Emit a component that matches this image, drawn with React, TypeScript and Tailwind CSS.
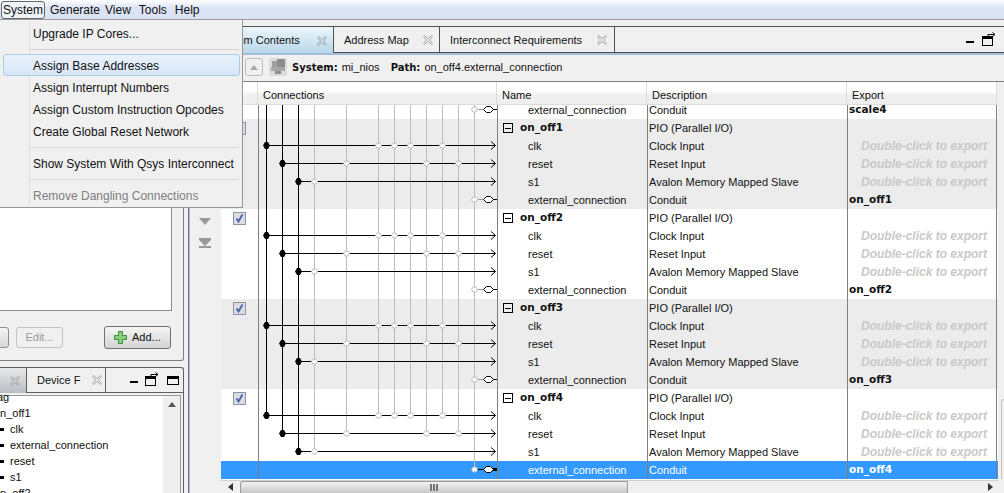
import * as React from 'react';

type Kind = 'head' | 'clk' | 'reset' | 's1' | 'ext';

const BLACK = [266.5, 282.5, 298.5];
const GRAY = [314.5, 346.5, 378.5, 394.5, 410.5, 426.5, 442.5, 458.5, 474.5];

const TAPS: Record<Kind, { black?: number; gray: number[] }> = {
  head: { gray: [] },
  clk: { black: 266.5, gray: [378.5, 394.5, 410.5, 442.5] },
  reset: { black: 282.5, gray: [346.5, 426.5, 458.5] },
  s1: { black: 298.5, gray: [314.5] },
  ext: { gray: [474.5] },
};

const ORDER: Kind[] = ['head', 'clk', 'reset', 's1', 'ext'];

// how far down a wire runs in the last group: it stops at its last tap
function lastTapKind(x: number): Kind {
  for (let i = ORDER.length - 1; i >= 0; i--) {
    const t = TAPS[ORDER[i]];
    if (t.black === x || t.gray.includes(x)) return ORDER[i];
  }
  return 'head';
}

function WireCell({ kind, last, selected }: { kind: Kind; last?: boolean; selected?: boolean }) {
  const idx = ORDER.indexOf(kind);
  const wire = (x: number, color: string) => {
    if (!last) return <line key={x} x1={x} x2={x} y1={0} y2={18} stroke={color} />;
    const end = ORDER.indexOf(lastTapKind(x));
    if (idx > end) return null;
    return <line key={x} x1={x} x2={x} y1={0} y2={idx === end ? 8.5 : 18} stroke={color} />;
  };
  const tap = TAPS[kind];
  return (
    <svg className="block h-[18px] w-[238px]" viewBox="259 0 238 18">
      {GRAY.map((x) => wire(x, '#bdbdbd'))}
      {BLACK.map((x) => wire(x, '#000'))}
      {tap.black !== undefined && (
        <>
          <line x1={tap.black} x2={495} y1={8.5} y2={8.5} stroke="#000" />
          <polyline points="491,4.5 495.5,8.5 491,12.5" fill="none" stroke="#000" />
        </>
      )}
      {tap.gray.map((x) => (
        <path
          key={x}
          d={`M${x - 3} 8.5 L${x - 1.5} 6 H${x + 1.5} L${x + 3} 8.5 L${x + 1.5} 11 H${x - 1.5} Z`}
          fill="#fff"
          stroke="#bdbdbd"
        />
      ))}
      {tap.black !== undefined && (
        <path
          d={`M${tap.black - 3.5} 8.5 L${tap.black - 1.5} 5 H${tap.black + 1.5} L${tap.black + 3.5} 8.5 L${tap.black + 1.5} 12 H${tap.black - 1.5} Z`}
          fill="#000"
        />
      )}
      {kind === 'ext' && (
        <>
          <line x1={478} x2={483} y1={8.5} y2={8.5} stroke={selected ? '#000' : '#9a9a9a'} />
          <path d="M483.5 8.5 L486.5 5.5 H490.5 L493.5 8.5 L490.5 11.5 H486.5 Z" fill="#fff" stroke="#000" />
          <line x1={493} x2={497} y1={8.5} y2={8.5} stroke="#000" strokeWidth={selected ? 3 : 1} />
        </>
      )}
    </svg>
  );
}

function CloseIcon({ className = '' }: { className?: string }) {
  return (
    <svg className={`h-[12px] w-[12px] shrink-0 ${className}`} viewBox="0 0 12 12">
      <path
        d="M1.5 2.5 L2.5 1.5 L6 4.5 L9.5 1.5 L10.5 2.5 L7.5 6 L10.5 9.5 L9.5 10.5 L6 7.5 L2.5 10.5 L1.5 9.5 L4.5 6 Z"
        fill="none"
        stroke="#a3a3a3"
      />
    </svg>
  );
}

function MinIcon() {
  return <div className="h-[2px] w-[8px] bg-black" />;
}

function FloatIcon() {
  return (
    <svg className="h-[15px] w-[15px]" viewBox="0 0 15 15">
      <rect x="0.5" y="4.5" width="10" height="9" fill="none" stroke="#000" />
      <rect x="0" y="4" width="11" height="3" fill="#000" />
      <path d="M6 4 L6 2.5 H12 M10.5 0.5 L13 2.5 L10.5 4.5" fill="none" stroke="#000" />
    </svg>
  );
}

function MaxIcon() {
  return (
    <svg className="h-[10px] w-[13px]" viewBox="0 0 13 10">
      <rect x="0.5" y="0.5" width="11" height="8" fill="none" stroke="#000" />
      <rect x="0" y="0" width="12" height="3" fill="#000" />
    </svg>
  );
}

function Triangle({ dir, className = '' }: { dir: 'up' | 'down' | 'left' | 'right'; className?: string }) {
  const pts = {
    up: '0,8 5,0 10,8',
    down: '0,0 10,0 5,8',
    left: '10,0 10,8 0,4',
    right: '0,0 0,8 10,4',
  }[dir];
  return (
    <svg className={className} viewBox="0 0 10 8" preserveAspectRatio="none">
      <polygon points={pts} fill="currentColor" />
    </svg>
  );
}

function Check() {
  return (
    <div className="flex h-[13px] w-[13px] items-center justify-center border border-[#8d96a3] bg-[#d9dde3]">
      <svg className="h-[11px] w-[11px]" viewBox="0 0 11 11">
        <path d="M2.5 5.5 L4.5 8.5 L8.5 1.5" fill="none" stroke="#4a62a8" strokeWidth="1.8" />
      </svg>
    </div>
  );
}

function Minus() {
  return (
    <div className="flex h-[10px] w-[10px] shrink-0 items-center justify-center border border-black">
      <div className="h-px w-[6px] bg-black" />
    </div>
  );
}

function Row({
  kind,
  label,
  desc,
  exportName,
  last,
  selected,
  check,
  className = '',
}: {
  kind: Kind;
  label: string;
  desc: string;
  exportName?: string;
  last?: boolean;
  selected?: boolean;
  check?: boolean;
  className?: string;
}) {
  const line = 'border-l border-[#808080]';
  return (
    <div className={`flex h-[18px] whitespace-nowrap ${selected ? 'bg-[#3399ff] text-white' : ''} ${className}`}>
      <div className="w-[37px] pl-[12px] pt-[3px]">{check && <Check />}</div>
      <div className={`w-[239px] ${line}`}>
        <WireCell kind={kind} last={last} selected={selected} />
      </div>
      <div className={`flex w-[150px] items-center ${line}`}>
        {kind === 'head' ? (
          <div className="flex items-center gap-[7px] pl-[5px] font-bold">
            <Minus />
            <span className="font-['DejaVu_Sans',sans-serif] text-[10.5px]">{label}</span>
          </div>
        ) : (
          <span className="pl-[30px]">{label}</span>
        )}
      </div>
      <div className={`flex w-[200px] items-center pl-px ${line}`}>{desc}</div>
      <div className={`flex w-[150px] items-center border-r ${line}`}>
        {exportName ? (
          <span className="pl-px font-['DejaVu_Sans',sans-serif] text-[10.5px] font-bold">{exportName}</span>
        ) : kind === 'head' ? null : (
          <span className="pl-[13px] text-[12px] font-bold italic text-[#c9c9c9]">Double-click to export</span>
        )}
      </div>
    </div>
  );
}

function Group({ name, index, last }: { name: string; index: number; last?: boolean }) {
  const shaded = index % 2 === 0;
  return (
    <div className={shaded ? 'bg-[#ececec]' : 'bg-white'}>
      <Row kind="head" label={name} desc="PIO (Parallel I/O)" check last={last} />
      <Row kind="clk" label="clk" desc="Clock Input" last={last} />
      <Row kind="reset" label="reset" desc="Reset Input" last={last} />
      <Row kind="s1" label="s1" desc="Avalon Memory Mapped Slave" last={last} />
      <Row kind="ext" label="external_connection" desc="Conduit" exportName={name} last={last} selected={last} />
    </div>
  );
}

function HeaderCell({ label, className = '' }: { label?: string; className?: string }) {
  return (
    <div
      className={`flex h-[22px] items-center border-r border-[#dcdcdc] bg-gradient-to-b from-white from-40% to-[#efefef] to-60% pl-[5px] pt-[4px] ${className}`}
    >
      {label}
    </div>
  );
}

function MenuItem({ label, active, disabled }: { label: string; active?: boolean; disabled?: boolean }) {
  return (
    <div
      className={`ml-[3px] mr-[2px] flex h-[22px] items-center rounded-[3px] border pl-[29px] pt-[2px] ${
        active ? 'border-[#a8cdea] bg-gradient-to-b from-[#eaf2fb] to-[#d6e6f7]' : 'border-transparent'
      } ${disabled ? 'text-[#7f7f7f]' : ''}`}
    >
      {label}
    </div>
  );
}

function MenuSep() {
  return (
    <div className="flex h-[10px] items-center pl-[30px] pr-[3px]">
      <div className="h-px w-full bg-[#d7d7d7]" />
    </div>
  );
}

function SystemMenu() {
  return (
    <div className="absolute left-0 top-[20px] z-10 h-[188px] w-[243px] border-b border-r border-[#979797] bg-[#f0f0f0] pt-[2px] text-[12px]">
      <div className="absolute bottom-[2px] left-[29px] top-[2px] w-px bg-[#dfdfdf]" />
      <div className="relative">
        <MenuItem label="Upgrade IP Cores..." />
        <MenuSep />
        <MenuItem label="Assign Base Addresses" active />
        <MenuItem label="Assign Interrupt Numbers" />
        <MenuItem label="Assign Custom Instruction Opcodes" />
        <MenuItem label="Create Global Reset Network" />
        <MenuSep />
        <MenuItem label="Show System With Qsys Interconnect" />
        <MenuSep />
        <MenuItem label="Remove Dangling Connections" disabled />
      </div>
    </div>
  );
}

function LeftColumn() {
  const treeRow = 'flex h-[16px] items-center whitespace-nowrap';
  const bullet = <div className="mr-[6px] h-[3px] w-[4px] bg-black" />;
  return (
    <div className="flex w-[188px] shrink-0 flex-col">
      <div className="mt-[6px] flex h-[335px] w-[184px] flex-col rounded-br-[3px] border-b border-r border-[#808080]">
        <div className="mr-[11px] flex-1 border-b border-r border-[#8c8c8c] bg-white" />
        <div className="flex h-[49px] items-start pt-[16px]">
          <div className="-ml-[10px] h-[21px] w-[19px] rounded-[3px] border border-[#8c8c8c] bg-gradient-to-b from-[#f4f4f4] to-[#d8d8d8]" />
          <div className="ml-[7px] flex h-[21px] w-[47px] items-center justify-center rounded-[3px] border border-[#c4c4c4] text-[#9a9a9a]">
            Edit...
          </div>
          <div className="ml-[41px] -mt-px flex h-[23px] w-[67px] items-center gap-[5px] rounded-[3px] border border-[#707070] bg-gradient-to-b from-[#f5f5f5] to-[#d4d4d4] pl-[9px]">
            <svg className="h-[13px] w-[13px]" viewBox="0 0 13 13">
              <path d="M4.5 .5 H8.5 V4.5 H12.5 V8.5 H8.5 V12.5 H4.5 V8.5 H.5 V4.5 H4.5 Z" fill="#86d07c" stroke="#3f8f3f" />
            </svg>
            Add...
          </div>
        </div>
      </div>
      <div className="mt-[6px] flex min-h-0 w-[184px] flex-1 flex-col rounded-tr-[3px] border-r border-t border-[#606060]">
        <div className="flex h-[25px] shrink-0">
          <div className="flex w-[27px] items-center justify-end border-r border-[#606060] bg-gradient-to-b from-[#e8e8e8] to-[#b9bdc2] pr-[5px]">
            <CloseIcon />
          </div>
          <div className="flex w-[79px] items-center whitespace-nowrap border-b border-r border-[#606060] pl-[10px]">
            Device F
            <CloseIcon className="ml-[11px]" />
          </div>
          <div className="flex flex-1 items-center justify-end gap-[7px] border-b border-[#606060] pb-px pr-[3px]">
            <div className="mt-[5px]">
              <MinIcon />
            </div>
            <FloatIcon />
            <div className="mt-[2px]">
              <MaxIcon />
            </div>
          </div>
        </div>
        <div className="mr-[2px] mt-[2px] flex min-h-0 flex-1 border-r border-t border-[#9a9a9a] bg-white">
          <div className="-mt-[7px] min-w-0 flex-1 overflow-hidden">
            <div className={`${treeRow} -ml-[3px]`}>ag</div>
            <div className={`${treeRow} -ml-[6px]`}>on_off1</div>
            <div className={treeRow}>{bullet}clk</div>
            <div className={treeRow}>{bullet}external_connection</div>
            <div className={treeRow}>{bullet}reset</div>
            <div className={treeRow}>{bullet}s1</div>
            <div className={`${treeRow} -ml-[6px]`}>on_off2</div>
          </div>
          <div className="flex w-[17px] shrink-0 justify-center bg-[#efefef] pt-[6px] text-[#555]">
            <Triangle dir="up" className="h-[5px] w-[8px]" />
          </div>
        </div>
      </div>
    </div>
  );
}

function Tab({ label, width, gap, active }: { label: string; width: string; gap: string; active?: boolean }) {
  return (
    <div
      className={`flex items-center justify-between whitespace-nowrap border-r border-[#505050] pt-px ${width} ${gap} ${
        active ? 'bg-gradient-to-b from-[#ecf7fc] to-[#b9d7ea]' : 'border-b'
      }`}
    >
      <span>{label}</span>
      <CloseIcon />
    </div>
  );
}

function RightColumn() {
  return (
    <div className="flex min-w-0 flex-1 flex-col pt-[6px]">
      <div className="flex h-[27px] shrink-0 border-t border-[#505050]">
        <Tab label="System Contents" width="w-[144px]" gap="pl-[26px] pr-[5px]" active />
        <Tab label="Address Map" width="w-[106px]" gap="pl-[10px] pr-[5px]" />
        <Tab label="Interconnect Requirements" width="w-[175px]" gap="pl-[10px] pr-[6px]" />
        <div className="flex flex-1 items-center justify-end gap-[8px] border-b border-[#505050] pr-[7px]">
          <div className="mt-[5px]">
            <MinIcon />
          </div>
          <FloatIcon />
        </div>
      </div>
      <div className="h-[2px] shrink-0 bg-[#a4bdd8]" />
      <div className="flex h-[27px] shrink-0 items-center border-b border-[#808080] pb-[2px] pl-[55px]">
        <div className="flex h-[18px] w-[18px] items-center justify-center rounded-[3px] border border-[#bcbcbc] text-[#a8a8a8]">
          <Triangle dir="up" className="h-[5px] w-[8px]" />
        </div>
        <svg className="ml-[6px] h-[18px] w-[18px]" viewBox="0 0 18 18">
          <rect width="18" height="18" rx="2" fill="#dcdcdc" />
          <rect x="3" y="3" width="5" height="6" fill="#a0a0a0" />
          <rect x="8" y="1" width="8" height="8" fill="#8c8c8c" />
          <rect x="2" y="9" width="14" height="4" fill="#a6a6a6" />
          <rect x="6" y="13" width="6" height="3" fill="#8c8c8c" />
        </svg>
        <span className="ml-[5px] font-['DejaVu_Sans',sans-serif] text-[10px] font-bold">System:</span>
        <span className="ml-[4px] w-[49px]">mi_nios</span>
        <span className="font-['DejaVu_Sans',sans-serif] text-[10px] font-bold">Path:</span>
        <span className="ml-[4px]">on_off4.external_connection</span>
      </div>
      <div className="flex min-h-0 flex-1">
        <div className="flex w-[31px] shrink-0 flex-col items-center pr-px pt-[136px] text-[#999]">
          <Triangle dir="down" className="h-[7px] w-[12px]" />
          <div className="mt-[13px] h-[2px] w-[12px] bg-current" />
          <Triangle dir="down" className="h-[6px] w-[12px]" />
          <div className="h-[2px] w-[12px] bg-current" />
        </div>
        <div className="flex w-[777px] shrink-0 flex-col">
          <div className="flex shrink-0 border-b border-[#dcdcdc]">
            <HeaderCell className="w-[37px]" />
            <HeaderCell className="w-[239px]" label="Connections" />
            <HeaderCell className="w-[150px]" label="Name" />
            <HeaderCell className="w-[200px]" label="Description" />
            <HeaderCell className="w-[150px]" label="Export" />
          </div>
          <div className="h-[375px] shrink-0 overflow-hidden bg-white">
            <Row
              kind="ext"
              label="external_connection"
              desc="Conduit"
              exportName="scale4"
              className="-mt-[4px]"
            />
            <Group name="on_off1" index={0} />
            <Group name="on_off2" index={1} />
            <Group name="on_off3" index={2} />
            <Group name="on_off4" index={3} last />
          </div>
          <div className="flex min-h-0 flex-1 items-stretch border-t border-[#d0d0d0]">
            <div className="flex w-[19px] items-center justify-center text-[#333]">
              <Triangle dir="left" className="h-[8px] w-[5px]" />
            </div>
            <div className="relative flex w-[388px] items-center justify-center rounded-tl-[3px] border-l border-r border-t border-[#9a9a9a] bg-gradient-to-b from-[#f2f2f2] to-[#c8c8c8]">
              <div className="h-[7px] w-[8px] border-x-2 border-[#777]">
                <div className="mx-auto h-full w-[2px] bg-[#777]" />
              </div>
            </div>
            <div className="flex flex-1 items-center justify-end bg-[#f0f0f0] pr-[5px] text-[#333]">
              <Triangle dir="right" className="h-[8px] w-[5px]" />
            </div>
          </div>
        </div>
        <div className="flex-1 pl-[3px] pt-[317px]">
          <div className="h-[80px] rounded-tl-[3px] border-l border-t border-[#c4c4c4]" />
        </div>
      </div>
    </div>
  );
}

export default function App() {
  return (
    <div className="relative flex h-[493px] w-[1004px] flex-col overflow-hidden bg-[#f0f0f0] font-['Liberation_Sans',sans-serif] text-[11px] text-[#111]">
      <div className="flex h-[20px] shrink-0 items-center border-b border-[#9c9c9c] bg-gradient-to-b from-white to-[#dbe4f4] to-40% pl-px text-[12px]">
        <div className="flex h-[18px] w-[44px] items-center justify-center rounded-[3px] border border-[#666] bg-[#eef2f9]">
          System
        </div>
        <span className="ml-[5px]">Generate</span>
        <span className="ml-[5px]">View</span>
        <span className="ml-[8px]">Tools</span>
        <span className="ml-[8px]">Help</span>
      </div>
      <div className="flex min-h-0 flex-1">
        <LeftColumn />
        <div className="w-[2px] shrink-0 border-l border-[#707070] bg-[#a4bdd8]" />
        <RightColumn />
      </div>
      <SystemMenu />
    </div>
  );
}
